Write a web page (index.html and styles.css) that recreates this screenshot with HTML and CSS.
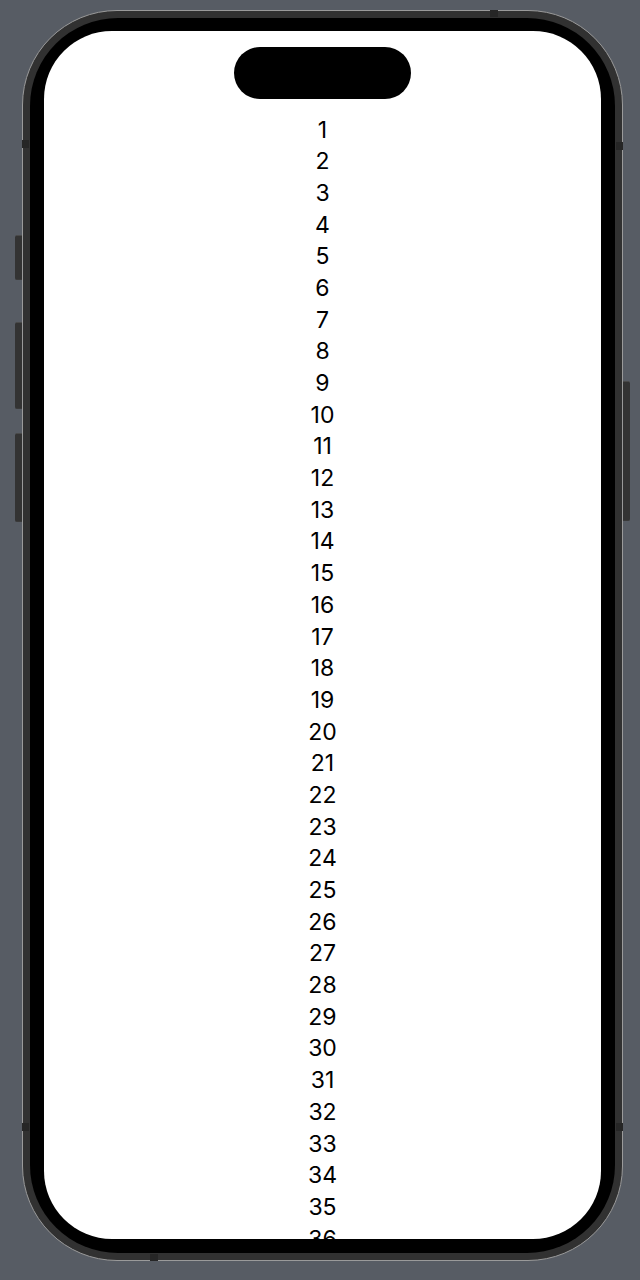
FILE: index.html
```html
<!DOCTYPE html>
<html lang="en">
<head>
<meta charset="utf-8">
<title>List</title>
<link rel="stylesheet" href="styles.css">
</head>
<body>
<div class="phone">
  <span class="btn btn-action"></span>
  <span class="btn btn-vol-up"></span>
  <span class="btn btn-vol-down"></span>
  <span class="btn btn-power"></span>
  <span class="band band-lt"></span>
  <span class="band band-rt"></span>
  <span class="band band-top"></span>
  <span class="band band-lb"></span>
  <span class="band band-rb"></span>
  <span class="band band-bottom"></span>
  <div class="bezel">
    <div class="screen">
      <div class="island"></div>
      <div class="list">
        <div class="row">1</div>
        <div class="row">2</div>
        <div class="row">3</div>
        <div class="row">4</div>
        <div class="row">5</div>
        <div class="row">6</div>
        <div class="row">7</div>
        <div class="row">8</div>
        <div class="row">9</div>
        <div class="row">10</div>
        <div class="row">11</div>
        <div class="row">12</div>
        <div class="row">13</div>
        <div class="row">14</div>
        <div class="row">15</div>
        <div class="row">16</div>
        <div class="row">17</div>
        <div class="row">18</div>
        <div class="row">19</div>
        <div class="row">20</div>
        <div class="row">21</div>
        <div class="row">22</div>
        <div class="row">23</div>
        <div class="row">24</div>
        <div class="row">25</div>
        <div class="row">26</div>
        <div class="row">27</div>
        <div class="row">28</div>
        <div class="row">29</div>
        <div class="row">30</div>
        <div class="row">31</div>
        <div class="row">32</div>
        <div class="row">33</div>
        <div class="row">34</div>
        <div class="row">35</div>
        <div class="row">36</div>
      </div>
    </div>
  </div>
</div>
</body>
</html>
```
FILE: styles.css
```css
html, body {
  margin: 0;
  height: 1280px;
  overflow: hidden;
}
body {
  background: #575c64;
  padding: 10px 0 0 22px;
  box-sizing: border-box;
  font-family: Inter, "Liberation Sans", sans-serif;
}
.phone {
  position: relative;
  width: 601px;
  height: 1251px;
  box-sizing: border-box;
  border: 1px solid #9a9a9a;
  border-radius: 95px;
  background: #313131;
  padding: 7px;
}
.bezel {
  height: 100%;
  box-sizing: border-box;
  background: #000;
  border-radius: 88px;
  padding: 13px 14px 14px;
}
.screen {
  position: relative;
  height: 100%;
  box-sizing: border-box;
  background: #fff;
  border-radius: 68px;
  overflow: hidden;
  padding-top: 83.5px;
}
.island {
  position: absolute;
  top: 16px;
  left: 50%;
  width: 177px;
  height: 52px;
  margin-left: -88.5px;
  background: #000;
  border-radius: 26px;
}
.list {
  display: flex;
  flex-direction: column;
  align-items: center;
}
.row {
  height: 31.7px;
  line-height: 31.7px;
  font-size: 23px;
  color: #000;
}
.btn {
  position: absolute;
  width: 7px;
  background: #333333;
  border-top: 1px solid #4a4a4a;
  border-bottom: 1px solid #3a3a3a;
  box-sizing: border-box;
}
.btn-action { left: -8px; top: 224px; height: 45px; border-radius: 2px 0 0 2px; }
.btn-vol-up { left: -8px; top: 311px; height: 87px; border-radius: 2px 0 0 2px; }
.btn-vol-down { left: -8px; top: 422px; height: 89px; border-radius: 2px 0 0 2px; }
.btn-power { right: -8px; top: 370px; height: 140px; border-radius: 0 2px 2px 0; }
.band {
  position: absolute;
  background: #262626;
}
.band-lt { left: -1px; top: 129px; width: 7px; height: 8px; }
.band-rt { right: -1px; top: 131px; width: 7px; height: 8px; }
.band-lb { left: -1px; top: 1112px; width: 7px; height: 8px; }
.band-rb { right: -1px; top: 1112px; width: 7px; height: 8px; }
.band-top { top: -1px; left: 467px; width: 8px; height: 7px; }
.band-bottom { bottom: -1px; left: 127px; width: 8px; height: 7px; }
```
